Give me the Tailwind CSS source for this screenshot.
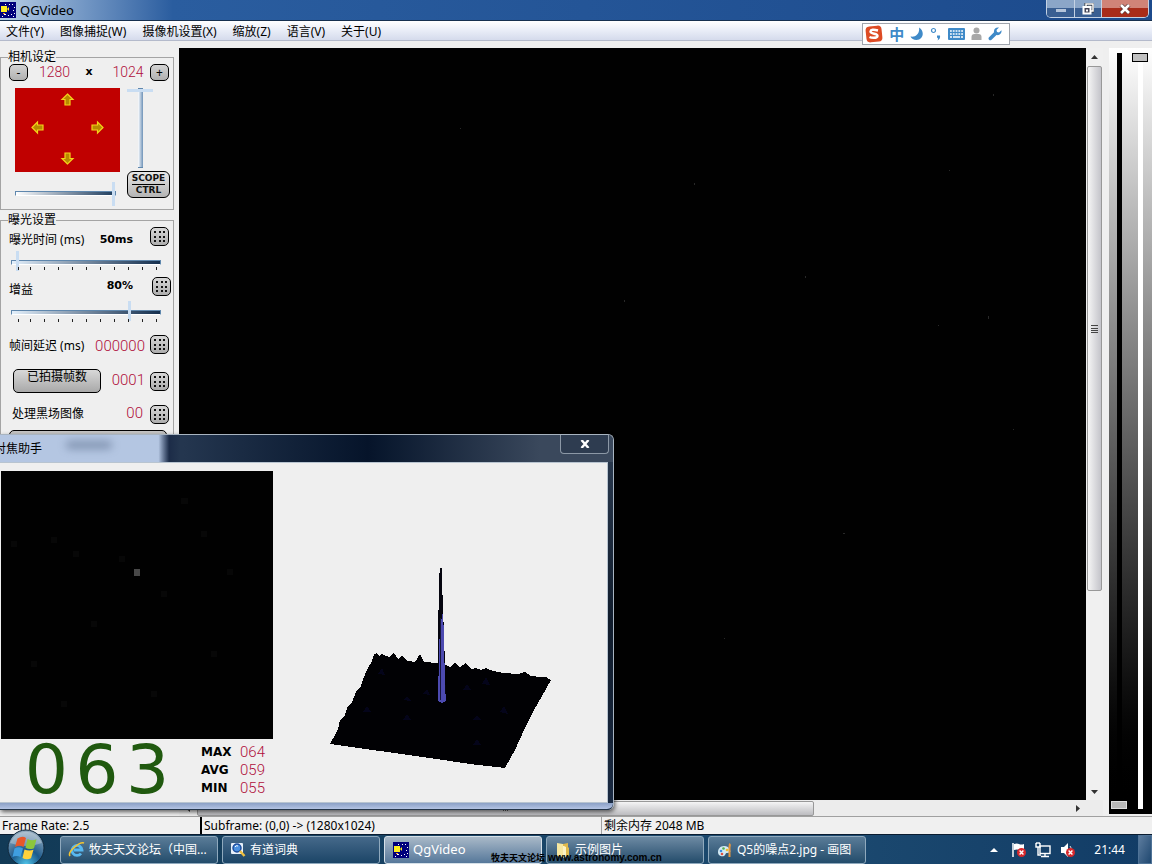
<!DOCTYPE html>
<html lang="zh-CN">
<head>
<meta charset="utf-8">
<meta name="viewport" content="width=device-width, initial-scale=1">
<title>QGVideo</title>
<script src="https://cdn.jsdelivr.net/npm/@tailwindcss/browser@4"></script>
</head>
<body class="bg-[#efefef]">
<svg width="0" height="0" class="absolute" aria-hidden="true">
  <defs>
    <symbol id="keypad" viewBox="0 0 19 19">
      <g fill="#111" shape-rendering="crispEdges"><path d="M4 4h2v2H4zM9 4h2v2H9zM13 4h2v2h-2zM4 9h2v2H4zM9 9h2v2H9zM13 9h2v2h-2zM4 13h2v2H4zM9 13h2v2H9zM13 13h2v2h-2z"/></g>
    </symbol>
    <symbol id="arrow" viewBox="0 0 14 13">
      <path d="M7 1l5.500 5.500H9.500V12h-5V6.500H1.500z" fill="#b88a00" stroke="#f4d21a" stroke-width="1.200"/>
    </symbol>
    <symbol id="camera" viewBox="0 0 16 16">
      <rect width="16" height="16" fill="#00007c"/>
      <path d="M1 4h6v6H1zM7 7l2-2v4l-2-2z" fill="#ffee20"/>
      <path d="M12 2h1v1h-1zM14 5h1v1h-1zM13 8h1v1h-1zM14 11h1v1h-1zM11 12h1v1h-1zM8 13h1v1H8zM4 12h2v1H4zM2 14h1v1H2zM9 2h1v1H9zM5 2h1v1H5zM13 14h1v1h-1z" fill="#fff"/>
      <path d="M3 11h2v1H3z" fill="#ff9a20"/>
    </symbol>
    <symbol id="badge" viewBox="0 0 8 8">
      <circle cx="4" cy="4" r="4" fill="#d8282c"/><path d="M2.300 2.300l3.400 3.400M5.700 2.300L2.300 5.700" stroke="#fff" stroke-width="1.300"/>
    </symbol>
  </defs>
</svg>

<div class="relative flex h-screen flex-col overflow-hidden bg-[#efefef] font-['Noto_Sans','Noto_Sans_CJK_SC',sans-serif] text-xs text-black">

  <header class="flex h-[21px] shrink-0 items-start justify-between border-b border-[#16304f] bg-linear-to-r from-[#b9cfe6] via-[#2a5d9f] via-15% to-[#1c4a8c]">
    <div class="flex h-5 items-center gap-1">
      <svg class="size-4" aria-hidden="true"><use href="#camera"/></svg>
      <h1 class="text-[13px] leading-4">QGVideo</h1>
    </div>
    <div class="mr-[3px] flex h-[18px] overflow-hidden rounded-b-[5px] border border-t-0 border-[#c4d2e4]">
      <button aria-label="最小化" class="flex w-7 items-center justify-center border-r border-[#c4d2e4] bg-linear-to-b from-[#8ba6c8] from-50% to-[#3a5f92] to-50%"><span class="mt-1 h-[3px] w-[10px] bg-[#b4c4da]"></span></button>
      <button aria-label="还原" class="flex w-[27px] items-center justify-center border-r border-[#c4d2e4] bg-linear-to-b from-[#8ba6c8] from-50% to-[#3a5f92] to-50%">
        <svg class="h-3 w-3" viewBox="0 0 12 12" fill="none"><path d="M4 3V1h7v7H9" stroke="#333" stroke-width="3"/><path d="M4 3V1h7v7H9" stroke="#fff" stroke-width="1.500"/><rect x="1.500" y="4" width="7" height="6.500" fill="#445" stroke="#fff" stroke-width="2"/><path d="M4 6.500h2v2H4z" fill="#fff"/></svg>
      </button>
      <button aria-label="关闭" class="flex w-[46px] items-center justify-center bg-linear-to-b from-[#d08478] from-50% to-[#a82c1a] to-50%">
        <svg class="h-[10px] w-3" viewBox="0 0 12 10"><path d="M2 1l8 8M10 1L2 9" stroke="#533" stroke-width="4"/><path d="M2 1l8 8M10 1L2 9" stroke="#fff" stroke-width="2.600"/></svg>
      </button>
    </div>
  </header>

  <nav class="flex h-5 shrink-0 items-center gap-4 border-b border-[#b4bacb] bg-linear-to-b from-white via-[#e9edf7] to-[#d5dbec] pt-[2px] pl-[6px] text-[12px]">
    <button>文件(Y)</button>
    <button>图像捕捉(W)</button>
    <button>摄像机设置(X)</button>
    <button>缩放(Z)</button>
    <button>语言(V)</button>
    <button>关于(U)</button>
  </nav>

  <main class="flex min-h-0 flex-1 pt-[7px]">
    <aside class="w-[179px] shrink-0 pr-[5px]">
      <fieldset class="mt-[2px] h-[160px] border border-[#a4a4a4] pr-1 pl-2">
        <legend class="-ml-px h-[14px] text-[12px] leading-[14px]">相机设定</legend>
        <div class="flex h-[17px] items-center">
          <button aria-label="减小" class="h-[17px] w-[19px] rounded-[5px] border border-black bg-linear-to-b from-[#d4d4d4] to-[#b0b0b0] leading-3">-</button>
          <output class="w-[45px] pl-[11px] font-['Roboto'] text-[14px] font-light text-[#b0103c]">1280</output>
          <span class="w-8 text-center font-['DejaVu_Sans'] text-[11px] font-bold">x</span>
          <output class="ml-[6px] w-[34px] text-center font-['Roboto'] text-[14px] font-light text-[#b0103c]">1024</output>
          <button aria-label="增大" class="ml-auto h-[17px] w-[19px] rounded-[5px] border border-black bg-linear-to-b from-[#d4d4d4] to-[#b0b0b0] leading-3">+</button>
        </div>
        <div class="mt-[7px] flex justify-between">
          <div class="w-[111px] pl-[6px]">
            <div class="grid h-[84px] w-[105px] grid-cols-3 grid-rows-[22px_1fr_28px] place-items-center bg-[#c00000] px-2">
              <button aria-label="上移" class="col-start-2"><svg class="h-[13px] w-[15px]"><use href="#arrow"/></svg></button>
              <button aria-label="左移" class="col-start-1 row-start-2"><svg class="h-[13px] w-[15px] -rotate-90"><use href="#arrow"/></svg></button>
              <button aria-label="右移" class="col-start-3 row-start-2"><svg class="h-[13px] w-[15px] rotate-90"><use href="#arrow"/></svg></button>
              <button aria-label="下移" class="col-start-2 row-start-3"><svg class="h-[13px] w-[15px] rotate-180"><use href="#arrow"/></svg></button>
            </div>
            <input type="range" aria-label="水平宽度" value="100" class="mt-[9px] block h-6 w-[101px] appearance-none bg-transparent [&::-webkit-slider-runnable-track]:h-[5px] [&::-webkit-slider-runnable-track]:border [&::-webkit-slider-runnable-track]:border-[#5f87ad] [&::-webkit-slider-runnable-track]:border-b-white [&::-webkit-slider-runnable-track]:bg-linear-to-r [&::-webkit-slider-runnable-track]:from-white [&::-webkit-slider-runnable-track]:to-[#1d3c5c] [&::-webkit-slider-thumb]:-mt-[10px] [&::-webkit-slider-thumb]:h-6 [&::-webkit-slider-thumb]:w-[3px] [&::-webkit-slider-thumb]:appearance-none [&::-webkit-slider-thumb]:bg-[#c9ddf2]">
          </div>
          <div class="-mr-px flex w-[43px] shrink-0 flex-col items-center">
            <input type="range" aria-label="垂直高度" value="0" class="-ml-4 block h-[80px] w-[26px] appearance-none bg-transparent [writing-mode:vertical-lr] [&::-webkit-slider-runnable-track]:w-[5px] [&::-webkit-slider-runnable-track]:border-x [&::-webkit-slider-runnable-track]:border-[#5f87ad] [&::-webkit-slider-runnable-track]:bg-linear-to-r [&::-webkit-slider-runnable-track]:from-white [&::-webkit-slider-runnable-track]:to-[#6f93b8] [&::-webkit-slider-thumb]:-ml-[11px] [&::-webkit-slider-thumb]:h-[3px] [&::-webkit-slider-thumb]:w-[26px] [&::-webkit-slider-thumb]:appearance-none [&::-webkit-slider-thumb]:bg-[#c9ddf2]">
            <button class="mt-[3px] flex h-[27px] w-[43px] flex-col items-center justify-center rounded-[6px] border border-black bg-linear-to-b from-[#e8e8e8] to-[#b4b4b4] font-['DejaVu_Sans'] text-[9px] leading-[11px] font-bold text-[#111]"><span class="border-b border-black">SCOPE</span><span>CTRL</span></button>
          </div>
        </div>
      </fieldset>

      <fieldset class="mt-[3px] h-[300px] border border-[#a4a4a4] pr-1 pl-2">
        <legend class="-ml-px h-[14px] text-[12px] leading-[14px]">曝光设置</legend>
        <div class="flex h-[18px] items-center">
          <label for="exp" class="pt-2">曝光时间 (ms)</label>
          <output class="ml-auto pt-2 text-right font-['DejaVu_Sans'] text-[11px] font-bold">50ms</output>
          <button aria-label="输入曝光时间" class="ml-[17px] size-[19px] rounded-[5px] border border-black bg-linear-to-b from-[#d8d8d8] to-[#adadad]"><svg class="-m-px size-[19px]"><use href="#keypad"/></svg></button>
        </div>
        <input id="exp" type="range" value="3" class="mt-[6px] ml-[2px] block h-[22px] w-[150px] appearance-none bg-transparent [&::-webkit-slider-runnable-track]:h-[5px] [&::-webkit-slider-runnable-track]:border [&::-webkit-slider-runnable-track]:border-[#5f87ad] [&::-webkit-slider-runnable-track]:border-b-white [&::-webkit-slider-runnable-track]:bg-linear-to-r [&::-webkit-slider-runnable-track]:from-[#e4f0fb] [&::-webkit-slider-runnable-track]:to-[#16304e] [&::-webkit-slider-thumb]:-mt-[10px] [&::-webkit-slider-thumb]:h-5 [&::-webkit-slider-thumb]:w-[3px] [&::-webkit-slider-thumb]:appearance-none [&::-webkit-slider-thumb]:bg-[#c9ddf2]">
        <svg class="-mt-[6px] ml-[8px] h-[3px] w-[142px]" shape-rendering="crispEdges" aria-hidden="true"><path d="M1 0v3M13 0v3M27 0v3M41 0v3M55 0v3M69 0v3M83 0v3M97 0v3M111 0v3M125 0v3M139 0v3" stroke="#222"/></svg>
        <div class="mt-[6px] flex h-[20px] items-center">
          <label for="gain" class="pt-2">增益</label>
          <output class="ml-auto font-['DejaVu_Sans'] text-[11px] font-bold">80%</output>
          <button aria-label="输入增益" class="mr-[-2px] ml-[19px] size-[19px] rounded-[5px] border border-black bg-linear-to-b from-[#d8d8d8] to-[#adadad]"><svg class="-m-px size-[19px]"><use href="#keypad"/></svg></button>
        </div>
        <input id="gain" type="range" value="80" class="mt-[5px] ml-[2px] block h-[22px] w-[150px] appearance-none bg-transparent [&::-webkit-slider-runnable-track]:h-[5px] [&::-webkit-slider-runnable-track]:border [&::-webkit-slider-runnable-track]:border-[#5f87ad] [&::-webkit-slider-runnable-track]:border-b-white [&::-webkit-slider-runnable-track]:bg-linear-to-r [&::-webkit-slider-runnable-track]:from-[#e4f0fb] [&::-webkit-slider-runnable-track]:to-[#16304e] [&::-webkit-slider-thumb]:-mt-[10px] [&::-webkit-slider-thumb]:h-5 [&::-webkit-slider-thumb]:w-[3px] [&::-webkit-slider-thumb]:appearance-none [&::-webkit-slider-thumb]:bg-[#c9ddf2]">
        <svg class="-mt-[4px] ml-[8px] h-[3px] w-[142px]" shape-rendering="crispEdges" aria-hidden="true"><path d="M1 0v3M13 0v3M27 0v3M41 0v3M55 0v3M69 0v3M83 0v3M97 0v3M111 0v3M125 0v3M139 0v3" stroke="#222"/></svg>
        <div class="mt-[12px] flex h-[20px] items-center">
          <span class="pt-1">帧间延迟 (ms)</span>
          <output class="ml-auto pt-[6px] font-['Roboto'] text-[15px] font-light text-[#b0103c]">000000</output>
          <button aria-label="输入帧间延迟" class="ml-[5px] size-[19px] rounded-[5px] border border-black bg-linear-to-b from-[#d8d8d8] to-[#adadad]"><svg class="-m-px size-[19px]"><use href="#keypad"/></svg></button>
        </div>
        <div class="mt-[15px] flex h-[24px] items-center">
          <button class="ml-1 h-6 w-[88px] rounded-[5px] border border-black bg-linear-to-b from-[#d8d8d8] to-[#a9a9a9] pb-2 text-[12px] leading-3">已拍摄帧数</button>
          <output class="ml-auto font-['Roboto'] text-[15px] font-light text-[#b0103c]">0001</output>
          <button aria-label="输入帧数" class="ml-[5px] size-[19px] rounded-[5px] border border-black bg-linear-to-b from-[#d8d8d8] to-[#adadad]"><svg class="-m-px size-[19px]"><use href="#keypad"/></svg></button>
        </div>
        <div class="mt-[11px] flex h-[20px] items-center">
          <span class="ml-[3px]">处理黑场图像</span>
          <output class="ml-auto font-['Roboto'] text-[15px] font-light text-[#b0103c]">00</output>
          <button aria-label="输入黑场数" class="ml-[7px] size-[19px] rounded-[5px] border border-black bg-linear-to-b from-[#d8d8d8] to-[#adadad]"><svg class="-m-px size-[19px]"><use href="#keypad"/></svg></button>
        </div>
        <button aria-label="开始" class="mt-[6px] h-6 w-[158px] rounded-[5px] border border-black bg-[#c4c4c4]"></button>
      </fieldset>
    </aside>

    <section class="flex min-w-0 flex-1 flex-col" aria-label="预览">
      <div class="flex min-h-0 flex-1">
        <svg class="h-full min-w-0 flex-1 bg-[#010101]" role="img" aria-label="实时图像">
          <g fill="#282828"><path d="M515 135h1v2h-1zM281 80h1v1h-1zM814 46h1v2h-1zM626 228h1v2h-1zM445 252h1v2h-1zM809 268h1v3h-1zM759 277h1v1h-1zM545 590h1v1h-1zM664 485h2v1h-2zM770 122h1v1h-1zM834 381h1v1h-1z"/></g>
        </svg>
        <div class="flex w-[17px] flex-col items-center bg-[#f0f0f0]">
          <button aria-label="向上滚动" class="flex h-[18px] w-full items-center justify-center"><svg class="h-1 w-[7px]" viewBox="0 0 7 4"><path d="M0 4L3.500 0 7 4z" fill="#333"/></svg></button>
          <div class="flex h-[525px] w-[15px] items-center justify-center rounded-[2px] border border-[#989898] bg-linear-to-r from-[#f5f5f5] to-[#c4c4ca]">
            <span class="h-[8px] w-[7px] border-y border-[#444]"><span class="mt-[2px] block border-y border-[#444] pb-px"></span></span>
          </div>
          <button aria-label="向下滚动" class="mt-auto flex h-[17px] w-full items-center justify-center"><svg class="h-1 w-[7px]" viewBox="0 0 7 4"><path d="M0 0h7L3.500 4z" fill="#333"/></svg></button>
        </div>
      </div>
      <div class="flex h-[16px] shrink-0 items-center bg-[#ececec] pr-[17px]">
        <button aria-label="向左滚动" class="flex w-[18px] justify-center"><svg class="h-[7px] w-1" viewBox="0 0 4 7"><path d="M4 0v7L0 3.500z" fill="#333"/></svg></button>
        <div class="flex h-[15px] w-[617px] items-center justify-center rounded-[2px] border border-[#989898] bg-linear-to-b from-[#f5f5f5] to-[#bcbcc0]"><span class="flex gap-px"><span class="h-[6px] w-px bg-[#555]"></span><span class="h-[6px] w-px bg-[#555]"></span><span class="h-[6px] w-px bg-[#555]"></span></span></div>
        <button aria-label="向右滚动" class="ml-auto flex w-[17px] justify-center"><svg class="h-[7px] w-1" viewBox="0 0 4 7"><path d="M0 0v7l4-3.500z" fill="#333"/></svg></button>
      </div>
    </section>

    <section aria-label="色阶" class="mb-[2px] ml-[6px] flex w-[43px] shrink-0 justify-between bg-linear-to-b from-white to-black py-[5px] pr-1 pl-[2px]">
      <input type="range" aria-label="黑色阶" value="100" class="h-full w-4 appearance-none bg-transparent [writing-mode:vertical-lr] [&::-webkit-slider-runnable-track]:w-[5px] [&::-webkit-slider-runnable-track]:bg-black [&::-webkit-slider-thumb]:-ml-[6px] [&::-webkit-slider-thumb]:h-2 [&::-webkit-slider-thumb]:w-4 [&::-webkit-slider-thumb]:appearance-none [&::-webkit-slider-thumb]:border [&::-webkit-slider-thumb]:border-[#ddd] [&::-webkit-slider-thumb]:bg-[#b8b8b8]">
      <input type="range" aria-label="白色阶" value="0" class="h-full w-4 appearance-none bg-transparent [writing-mode:vertical-lr] [&::-webkit-slider-runnable-track]:w-[5px] [&::-webkit-slider-runnable-track]:bg-white [&::-webkit-slider-thumb]:-ml-[6px] [&::-webkit-slider-thumb]:h-[9px] [&::-webkit-slider-thumb]:w-4 [&::-webkit-slider-thumb]:appearance-none [&::-webkit-slider-thumb]:border [&::-webkit-slider-thumb]:border-black [&::-webkit-slider-thumb]:bg-[#c0c0c0]">
    </section>
  </main>

  <footer class="flex h-[18px] shrink-0 border-t border-[#a0a0a0] bg-[#f0f0f0] text-[12px] leading-[17px]">
    <p class="w-[202px] shrink-0 border-r-2 border-black pl-[2px]">Frame Rate: 2.5</p>
    <p class="w-[400px] shrink-0 border-r border-[#a0a0a0] pl-[2px]">Subframe: (0,0) -&gt; (1280x1024)</p>
    <p class="pl-[2px]">剩余内存 2048 MB</p>
  </footer>

  <div class="relative flex h-[30px] shrink-0 items-center border-t border-[#0a1c30] bg-linear-to-r from-[#123a56] via-[#1c4a70] via-70% to-[#123c66] pl-[6px] text-white">
    <button aria-label="开始菜单" class="-mt-1 mr-[14px] size-10 shrink-0">
      <svg viewBox="0 0 40 40" class="size-10">
        <defs><radialGradient id="orb" cx=".5" cy=".95" r=".9"><stop offset="0" stop-color="#4fc3e8"/><stop offset=".45" stop-color="#1c5a8c"/><stop offset="1" stop-color="#8fa8bc"/></radialGradient></defs>
        <circle cx="20" cy="20" r="18" fill="url(#orb)" stroke="#10283c"/>
        <path d="M4 15a17 17 0 0 1 32 0q-16 6-32 0z" fill="#fff" opacity=".3"/>
        <path d="M11.500 10.500q5-3 8.500-.5l-2.500 9q-4-2.500-8.500 0z" fill="#e8582a"/>
        <path d="M21.500 11q4.500 2.500 9 .2l-2.500 9q-4.500 2-8.500-.4z" fill="#8cc63c"/>
        <path d="M8.500 20.500q4.500-2.500 8.500 0l-2.500 8.500q-4-2-8 0z" fill="#3f9ee0"/>
        <path d="M18.500 21.500q4.500 2 9 .3l-2.500 8.500q-4.500 2-8.500-.3z" fill="#ffd23c"/>
      </svg>
    </button>
    <div class="flex gap-1 text-xs">
      <button class="flex h-7 w-[158px] items-center gap-1 overflow-hidden rounded-[3px] border border-[#8fa9bd] bg-linear-to-b from-[#5a7c98] to-[#234c6b] pl-[7px] whitespace-nowrap">
        <svg class="size-[17px] shrink-0" viewBox="0 0 17 17" fill="none" aria-hidden="true"><path d="M13 12.500A5 5 0 1 1 14 9H6" stroke="#58b8f0" stroke-width="2.800"/><path d="M2 15C-1 11 12 0 16 2" stroke="#f4c430" stroke-width="1.600"/></svg>
        <span>牧夫天文论坛（中国...</span>
      </button>
      <button class="flex h-7 w-[158px] items-center gap-1 rounded-[3px] border border-[#8fa9bd] bg-linear-to-b from-[#45698a] to-[#1b4567] pl-[7px] whitespace-nowrap">
        <svg class="size-4 shrink-0" viewBox="0 0 16 16" fill="none" aria-hidden="true"><rect x="1" y="1" width="12" height="11" rx="1" fill="#e8f0fa"/><circle cx="7" cy="6" r="4" fill="#4a90e0" stroke="#1c4c9c" stroke-width="1.500"/><path d="M5 5q1-2 3-1" stroke="#fff"/><path d="M10 9l4.500 5" stroke="#f0c040" stroke-width="2.500"/></svg>
        <span>有道词典</span>
      </button>
      <button class="flex h-7 w-[158px] items-center gap-1 rounded-[3px] border border-[#d5e0e8] bg-linear-to-b from-[#a9b9c8] to-[#56789a] pl-[8px] text-[13px] whitespace-nowrap">
        <svg class="size-4 shrink-0" aria-hidden="true"><use href="#camera"/></svg>
        <span>QgVideo</span>
      </button>
      <button class="flex h-7 w-[158px] items-center gap-1 rounded-[3px] border border-[#8fa9bd] bg-linear-to-b from-[#6d8aa3] to-[#234c6b] pl-[8px] whitespace-nowrap">
        <svg class="size-4 shrink-0" viewBox="0 0 16 16" aria-hidden="true"><path d="M2 1l6 1v13l-6-1z" fill="#f6e7a0"/><path d="M8 2l5-1v4l1 1v8l-6 1z" fill="#dfb94c"/><path d="M9 4l2 1v10l-3 1V4z" fill="#fbf3c4"/></svg>
        <span>示例图片</span>
      </button>
      <button class="flex h-7 w-[158px] items-center gap-1 rounded-[3px] border border-[#8fa9bd] bg-linear-to-b from-[#5a7c98] to-[#234c6b] pl-[8px] whitespace-nowrap">
        <svg class="size-4 shrink-0" viewBox="0 0 16 16" aria-hidden="true"><path d="M7 4c-4 0-6 3-6 6 0 4 4 5 6 4 2-1 1-3 3-3 3 0 4-1 3-3-1-3-3-4-6-4z" fill="#d4eaf4"/><circle cx="4" cy="9" r="1.300" fill="#3c8ce0"/><circle cx="6.500" cy="6.500" r="1.300" fill="#50b050"/><circle cx="5" cy="12" r="1.300" fill="#e05040"/><circle cx="10" cy="8" r="1.300" fill="#f0c030"/><path d="M12.500 1q2 1 1 4v10h-2V5q0-3 1-4z" fill="#e8963c"/></svg>
        <span>Q5的噪点2.jpg - 画图</span>
      </button>
    </div>
    <div class="ml-auto flex h-full items-center">
      <button aria-label="显示隐藏的图标" class="mr-[13px]"><svg class="h-1 w-2" viewBox="0 0 8 4"><path d="M0 4l4-4 4 4z" fill="#fff"/></svg></button>
      <svg class="mr-[8px] size-4" viewBox="0 0 16 16" role="img" aria-label="操作中心"><path d="M2 1v14" stroke="#fff" stroke-width="1.500"/><path d="M3 2q3-1 5 0t5 0v6q-3 1-5 0T3 8z" fill="#fff"/><use href="#badge" x="6" y="6" width="9" height="9"/></svg>
      <svg class="mr-[9px] size-4" viewBox="0 0 16 16" role="img" aria-label="网络" fill="none" stroke="#fff" stroke-width="1.400"><rect x="5" y="4" width="10" height="7.500"/><path d="M10 12v2.500M6 14.500h8M1 1v4h4V1M3 5v8h3M2 0v2M4 0v2"/></svg>
      <svg class="mr-[18px] size-4" viewBox="0 0 16 16" role="img" aria-label="静音"><path d="M1 5h3l4-4v14l-4-4H1z" fill="#fff"/><path d="M10 4q2 2 1 5" stroke="#ddd" fill="none"/><use href="#badge" x="6" y="6" width="9" height="9"/></svg>
      <time class="mr-[13px] text-[12px]">21:44</time>
      <button aria-label="显示桌面" class="h-full w-[14px] border border-[#4f7397] bg-linear-to-br from-[#5c7c9e] to-[#1f4870]"></button>
    </div>
  </div>

  <div class="absolute top-[23px] right-[142px] flex h-[22px] w-[148px] items-center justify-between border border-[#9fa4ac] bg-white pr-[7px] pl-[2px] text-[#3f8ac8]">
    <svg class="size-[18px]" viewBox="0 0 18 18" role="img" aria-label="搜狗输入法"><rect x="1" y="1" width="16" height="16" rx="4" fill="#dd4b24" transform="rotate(-6 9 9)"/><path d="M13 5.500Q6 3.500 5.500 6.500c0 3 7.500 1.500 7 4.500-.5 3-7 1.500-8 1" fill="none" stroke="#fff" stroke-width="2.400"/></svg>
    <span class="font-['Noto_Sans_CJK_SC'] text-[15px] leading-4 font-bold">中</span>
    <svg class="size-[14px]" viewBox="0 0 14 14" aria-hidden="true"><path d="M9 0.500C15 4 13.500 13 6.500 13 3.500 13 1.500 11.500.5 9.500 6 10.500 10 6 9 .5z" fill="#3f8ac8"/></svg>
    <svg class="h-[14px] w-[11px]" viewBox="0 0 11 14" aria-hidden="true"><circle cx="3.500" cy="3.500" r="2" fill="none" stroke="#3f8ac8" stroke-width="1.200"/><path d="M7 8.500h3c.5 2-.5 4-2.500 5 1-2 .5-2.500-.5-3z" fill="#3f8ac8"/></svg>
    <svg class="h-3 w-[17px]" viewBox="0 0 17 12" aria-hidden="true"><rect width="17" height="12" rx="1" fill="#3f8ac8"/><path d="M2 3h13M2 6h13" stroke="#fff" stroke-width="1.600" stroke-dasharray="1.800 1"/><path d="M2 9h2M5 9h7M13 9h2" stroke="#fff" stroke-width="1.600"/></svg>
    <svg class="h-[14px] w-[11px]" viewBox="0 0 11 14" aria-hidden="true"><circle cx="5.500" cy="3.500" r="3" fill="#a8a8a8"/><path d="M0.500 13V10q0-3 3-3h4q3 0 3 3v3z" fill="#a8a8a8"/></svg>
    <svg class="size-[14px]" viewBox="0 0 14 14" aria-hidden="true"><path d="M13.500 3.200L11 5.500 9 5l-.5-2L11 .6C8 0 5.500 2 6 5.200L.8 10.500c-1 1.500.8 3.500 2.500 2.500l5.200-5C12 8.800 14 6 13.500 3.200z" fill="#3f8ac8"/></svg>
  </div>

  <section aria-label="对焦助手" class="absolute top-[434px] left-0 flex w-[614px] flex-col rounded-tr-[6px] rounded-br-[6px] border-t border-r border-[#a8b4c0] bg-linear-to-b from-[#2c3c52] via-[#101c2c] to-[#1a2a42] pr-[5px] shadow-[1px_2px_4px_rgba(0,0,0,0.600)]">
    <header class="-mr-[5px] flex h-[27px] items-start justify-between rounded-tr-[5px] bg-linear-to-r from-[#24364f] from-30% via-[#06142a] via-60% to-[#3a485c] to-88% pr-1">
      <div class="flex h-[27px] w-[180px] items-center bg-linear-to-r from-[#b4c6e2] from-88% via-[#1c2c48] via-94% to-[#24364f]">
        <h2 class="-ml-[6px] text-[12px]">对焦助手</h2>
        <span class="-mt-2 ml-6 h-2 w-[46px] rounded-full bg-[#5f7290] opacity-60 blur-[4px]"></span>
      </div>
      <button aria-label="关闭对焦助手" class="flex h-[19px] w-[49px] items-center justify-center rounded-b-[4px] border border-t-0 border-[#8c98a6] bg-[#2e3c50]"><svg class="h-2 w-[10px]" viewBox="0 0 10 8"><path d="M1.500 0l7 8M8.500 0l-7 8" stroke="#fff" stroke-width="2.400"/></svg></button>
    </header>
    <div class="flex h-[341px] border border-l-0 border-[#b8c4d0] bg-[#efefef] pt-[8px] pl-px">
      <div class="w-[272px] shrink-0">
        <svg class="block h-[268px] w-full bg-[#010101]" role="img" aria-label="焦点放大图">
          <g fill="#070707"><path d="M180 27h7v6h-7zM10 70h6v6h-6zM72 80h6v6h-6zM50 66h6v6h-6zM200 60h6v6h-6zM118 85h6v6h-6zM226 98h6v6h-6zM160 120h6v6h-6zM90 150h6v6h-6zM30 190h6v6h-6zM210 180h6v6h-6zM150 220h6v6h-6zM60 230h6v6h-6z"/></g>
          <rect x="133" y="98" width="6" height="7" fill="#484848"/>
        </svg>
        <div class="flex h-[62px] items-center pl-[20px]">
          <output class="grid w-[152px] grid-cols-3 text-center font-['DejaVu_Sans'] text-[68px] leading-[58px] text-[#20590f]"><span>0</span><span>6</span><span>3</span></output>
          <dl class="ml-[28px] grid grid-cols-[39px_auto] text-[12px] leading-[18px]">
            <dt class="font-['DejaVu_Sans'] font-bold">MAX</dt><dd class="font-['Roboto'] text-[15px] font-light text-[#b0103c]">064</dd>
            <dt class="font-['DejaVu_Sans'] font-bold">AVG</dt><dd class="font-['Roboto'] text-[15px] font-light text-[#b0103c]">059</dd>
            <dt class="font-['DejaVu_Sans'] font-bold">MIN</dt><dd class="font-['Roboto'] text-[15px] font-light text-[#b0103c]">055</dd>
          </dl>
        </div>
      </div>
      <svg class="mt-[69px] h-[240px] flex-1" viewBox="273 540 334 240" preserveAspectRatio="xMinYMin meet" shape-rendering="crispEdges" role="img" aria-label="三维亮度分布">
        <path d="M330 744L335 735 338 729 340 720 345 715 347 708 352 702 356 692 361 686 363 679 368 668 372 661 374 654 377 653 379 656 382 654 386 656 389 657 394 653 398 659 402 656 408 661 415 662 420 654 424 662 438 663 444 664 450 667 455 663 460 667 466 663 471 669 476 668 481 670 486 668 493 671 504 673 518 674 525 672 531 676 540 677 546 677 551 680 542 696 534 710 525 728 515 750 505 768 470 764 430 758 380 751z" fill="#010104"/>
        <path d="M441 568h1v14l1 26 1 28 1 30 1 36h-8v-60l1-64 1-10z" fill="#05050f"/>
        <path d="M441 622l2-10 1 26 1 48 1 15-4 2-4-2 1-50 1-24z" fill="#4c4ab0"/>
        <path d="M440 618v82" stroke="#15153a"/>
        <g fill="#04041a"><path d="M378 674l4-6 3 7zM423 694l4-5 3 6zM482 684l4-7 4 8zM473 720l4-5 4 5zM403 720l4-6 4 6zM500 712l4-6 4 8zM363 712l4-6 4 6zM463 690l4-6 4 6zM473 745l4-6 4 6zM403 700l4-4 4 5z"/></g>
      </svg>
    </div>
    <div class="-mr-[5px] h-[7px] rounded-br-[6px] border-b border-[#25364a] bg-linear-to-b from-[#8ba0c6] to-[#b4c4e4]"></div>
  </section>

  <p class="pointer-events-none absolute bottom-0 left-[491px] flex h-3 items-center gap-[3px] font-['Liberation_Sans','Noto_Sans_CJK_SC',sans-serif] text-[9px] leading-3 font-bold whitespace-nowrap text-black"><span>牧夫天文论坛</span><span class="text-[10px]">www.astronomy.com.cn</span></p>
</div>
</body>
</html>
